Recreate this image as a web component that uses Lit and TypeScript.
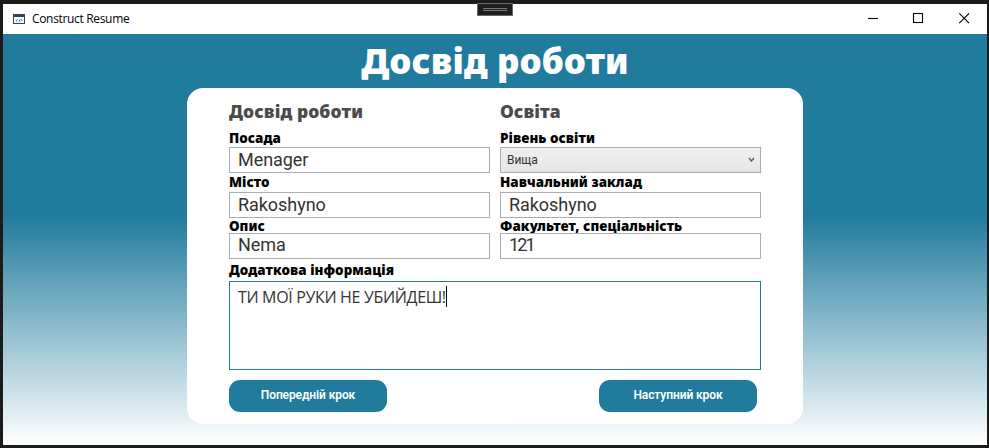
import { LitElement, html, css, svg } from "lit";
import { customElement, property } from "lit/decorators.js";

@customElement("title-bar")
class TitleBar extends LitElement {
  static styles = css`
    :host {
      display: flex;
      align-items: center;
      height: 30px;
      background: #fff;
      color: #000;
      box-sizing: border-box;
      padding-left: 10px;
      font: 12px "Open Sans", "Noto Sans", sans-serif;
    }
    .name {
      margin-left: 7px;
      line-height: 30px;
      letter-spacing: -0.33px;
      flex: 1;
    }
    .controls {
      display: flex;
      height: 30px;
      margin-right: -1px;
    }
    .controls svg {
      width: 46px;
      height: 30px;
    }
    svg {
      display: block;
    }
  `;
  render() {
    return html`
      <svg width="12" height="11" viewBox="0 0 12 11">
        <rect x="0.5" y="0.5" width="11" height="9" fill="#f4f7fb" stroke="#34435c" />
        <rect width="12" height="3" fill="#34435c" />
        <path d="M4.6 5.4 3.1 7l1 .9M5.8 7.9 7.3 5M7.6 7.6l1.4-1.4-.8-1" fill="none" stroke="#1681c9" stroke-width="0.8" />
      </svg>
      <span class="name">Construct Resume</span>
      <div class="controls">
        ${[
          svg`<path d="M18 14.5h10" />`,
          svg`<rect x="17.5" y="9.5" width="9" height="9" />`,
          svg`<path d="M17.3 9.3l9.8 9.8M27.1 9.3l-9.8 9.8" />`,
        ].map((g) => html`<svg viewBox="0 0 46 30" fill="none" stroke="#000" stroke-width="1.1">${g}</svg>`)}
      </div>
    `;
  }
}

@customElement("form-field")
class FormField extends LitElement {
  @property() label = "";
  @property() value = "";
  @property({ reflect: true }) kind = "text";

  static styles = css`
    :host {
      display: flex;
      flex-direction: column;
      justify-content: flex-end;
      min-width: 0;
    }
    .label {
      flex: none;
      font: 900 13.4px/18px "Noto Sans", sans-serif;
      color: #000;
      white-space: nowrap;
      letter-spacing: 0.05px;
      margin-bottom: var(--label-gap, 0);
    }
    .box {
      flex: none;
      box-sizing: border-box;
      height: 26px;
      border: 1px solid #abadb3;
      background: #fff;
      color: #333;
      padding-left: 8px;
      font: 18px / var(--text-line, 23px) Roboto, "Noto Sans", sans-serif;
      letter-spacing: -0.05px;
      white-space: nowrap;
    }
    :host([kind="number"]) .box {
      letter-spacing: -1.9px;
    }
    :host([kind="select"]) .box {
      display: flex;
      align-items: center;
      justify-content: space-between;
      padding: 0 5px 0 6px;
      border-color: #acacac;
      background: linear-gradient(#f0f0f0, #e5e5e5);
      font: 12px/24px Roboto, "Noto Sans", sans-serif;
    }
    :host([kind="area"]) .label {
      margin-bottom: 2px;
    }
    :host([kind="area"]) .box {
      height: 89px;
      border-color: #217b9c;
      font: 16px/22px "Open Sans", "Noto Sans", sans-serif;
      letter-spacing: -0.34px;
      padding-top: 4px;
    }
    .caret {
      display: inline-block;
      width: 1px;
      height: 21px;
      background: #000;
      vertical-align: top;
    }
  `;
  render() {
    return html`
      <div class="label">${this.label}</div>
      <div class="box">
        <span>${this.value}</span>${this.kind === "select"
          ? html`<svg width="7" height="6" viewBox="0 0 7 6"><path d="M1 1l2.5 3L6 1" fill="none" stroke="#555" stroke-width="1.3" /></svg>`
          : ""}${this.kind === "area" ? html`<span class="caret"></span>` : ""}
      </div>
    `;
  }
}

@customElement("app-root")
class AppRoot extends LitElement {
  static styles = css`
    :host {
      display: block;
      position: relative;
      width: 989px;
      height: 448px;
      box-sizing: border-box;
      padding: 4px 2px 3px 3px;
      background: #1b1b1c;
      overflow: hidden;
    }
    .grip {
      position: absolute;
      left: 477px;
      top: 3px;
      width: 36px;
      height: 13px;
      box-sizing: border-box;
      border: 1px solid #686868;
      background: #1f1f20;
      display: flex;
      align-items: center;
      justify-content: center;
    }
    .grip i {
      width: 24px;
      height: 3px;
      box-sizing: border-box;
      border: solid #777;
      border-width: 1px 0;
    }
    .body {
      height: 411px;
      background: linear-gradient(#207b9d 0%, #207b9d 44%, #fff 100%);
      display: flex;
      flex-direction: column;
      align-items: center;
    }
    h1 {
      margin: 0;
      height: 54px;
      font: 900 35px/53px "Noto Sans", sans-serif;
      color: #fff;
      white-space: nowrap;
      letter-spacing: 0.12px;
    }
    .card {
      box-sizing: border-box;
      width: 616px;
      height: 336px;
      border-radius: 16px;
      background: #fff;
      padding: 11px 42px 0;
      display: flex;
      flex-direction: column;
    }
    .grid {
      display: grid;
      grid-template-columns: 261px 261px;
      grid-template-rows: 25px 49px 45px 41px;
      column-gap: 10px;
    }
    .city {
      --label-gap: 1px;
    }
    .last {
      --label-gap: -2px;
      --text-line: 21px;
    }
    h2 {
      margin: 0;
      font: 900 17.5px/24px "Noto Sans", sans-serif;
      color: #4b4b4b;
      white-space: nowrap;
      letter-spacing: 0.08px;
    }
    .extra {
      height: 111px;
      width: 532px;
    }
    .actions {
      display: flex;
      justify-content: space-between;
      margin-top: 10px;
      width: 528px;
    }
    button {
      width: 158px;
      height: 32px;
      border: 0;
      padding: 0 0 2px;
      border-radius: 11px;
      background: #207b9d;
      color: #fff;
      font: 600 12px "Roboto", "Noto Sans", sans-serif;
      letter-spacing: -0.1px;
    }
  `;
  render() {
    return html`
      <title-bar></title-bar>
      <div class="body">
        <h1>Досвід роботи</h1>
        <div class="card">
          <div class="grid">
            <h2>Досвід роботи</h2>
            <h2>Освіта</h2>
            <form-field label="Посада" value="Menager"></form-field>
            <form-field label="Рівень освіти" value="Вища" kind="select"></form-field>
            <form-field class="city" label="Місто" value="Rakoshyno"></form-field>
            <form-field class="city" label="Навчальний заклад" value="Rakoshyno"></form-field>
            <form-field class="last" label="Опис" value="Nema"></form-field>
            <form-field class="last" label="Факультет, спеціальність" value="121" kind="number"></form-field>
          </div>
          <form-field class="extra" label="Додаткова інформація" value="ТИ МОЇ РУКИ НЕ УБИЙДЕШ!" kind="area"></form-field>
          <div class="actions">
            <button>Попередній крок</button>
            <button>Наступний крок</button>
          </div>
        </div>
      </div>
      <div class="grip"><i></i></div>
    `;
  }
}
